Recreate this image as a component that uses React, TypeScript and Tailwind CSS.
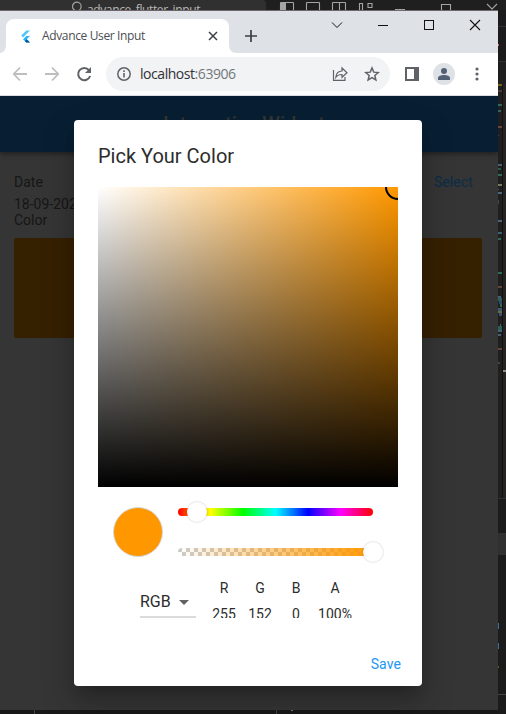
import React from "react";

const MINIMAP: [number, number, number, number, string][] = [
  [0, 84, 4, 2, "#8a6d14"], [0, 90, 4, 2, "#5a4038"], [0, 104, 4, 2, "#2f7a62"],
  [0, 110, 3, 2, "#3a7264"], [0, 126, 4, 2, "#7a4c3e"], [0, 135, 1, 1, "#55453e"],
  [0, 164, 4, 2, "#4f6d80"], [0, 168, 3, 2, "#2c6455"], [0, 174, 4, 2, "#2f7a62"],
  [0, 184, 4, 2, "#8b8a66"], [0, 189, 1, 1, "#466b80"], [0, 192, 4, 2, "#51788f"],
  [0, 200, 1, 4, "#4b4b4b"], [0, 220, 4, 2, "#54748a"], [0, 232, 4, 2, "#456b85"],
  [0, 238, 3, 2, "#2f7a62"], [0, 272, 4, 2, "#2f7a62"], [0, 286, 4, 2, "#714b40"],
  [0, 296, 3, 2, "#4e6f88"], [0, 298, 4, 3, "#2f6b62"], [1, 301, 3, 3, "#35547a"],
  [2, 304, 2, 3, "#2f7a62"], [0, 308, 4, 3, "#44647e"], [0, 311, 4, 2, "#77754f"],
  [1, 313, 3, 3, "#3c5b7d"], [2, 324, 1, 2, "#666"], [0, 326, 4, 5, "#2f6b62"],
  [0, 330, 4, 2, "#456b85"], [0, 334, 3, 2, "#4e6f80"], [0, 348, 4, 2, "#714b40"],
  [0, 362, 2, 2, "#4b4b4b"],
];

function EditorTop() {
  return (
    <div className="flex h-[10px] overflow-hidden bg-[#1f1f1f] text-[12px] leading-[20px] text-[#b8b8b8]">
      <div className="flex h-[10px] w-[266px] overflow-hidden rounded-tr-[4px] bg-[#303030] pl-[71px]">
        <svg width="12" height="10" fill="none" stroke="#a0a0a0" strokeWidth="1.2">
          <circle cx="5.8" cy="6.5" r="4.3" /><path d="M3 10l-3 3" />
        </svg>
        <span className="ml-[4px] whitespace-nowrap font-['Open_Sans',sans-serif] tracking-[-0.38px]">advance_flutter_input</span>
      </div>
      <svg width="240" height="10" fill="none" stroke="#a5a5a5" strokeWidth="1.1">
        <path d="M14.5 12V3q0-.5.5-.5h12q.5 0 .5.5v9M40.500 12V3q0-.5.5-.5h12q.5 0 .5.5v9M66.500 12V3q0-.5.5-.5h12q.5 0 .5.5v9M73.500 3v9M93.500 12V3.500h3V12M102 3.500h4v4h-4z" />
        <path d="M15 3h5v7h-5z" fill="#a5a5a5" stroke="none" />
        <path d="M129 9.500h10M175.500 12V4.500h9V12M221 4l10 10M231 4l-10 10" />
      </svg>
    </div>
  );
}

function EditorSide() {
  return (
    <svg className="ml-auto block" width="8" height="704" viewBox="0 10 8 704" shapeRendering="crispEdges">
      <path d="M0 10h8v704H0z" fill="#1b1b1b" />
      <path d="M0 26h8v1H0zM0 61h8v1H0zM0 498h8v1H0z" fill="#303030" />
      <path d="M0 62h8v436H0z" fill="#1f1f1f" />
      <path d="M4 84h1v414H4z" fill="#111" />
      <path d="M5 84h3v414H5z" fill="#252422" />
      <path d="M0 533h8v22H0z" fill="#303030" />
      <path d="M5 370h3v2H5z" fill="#8a8a8a" />
      <path d="M0 44h1v2H0z" fill="#d86b55" />
      <path d="M0 623h1v6H0zM0 643h1v6H0z" fill="#35749f" />
      <path d="M0 666h1v2H0z" fill="#496326" />
      <path d="M0 694h8v1H0z" fill="#444" />
      {MINIMAP.map(([x, y, w, h, c], i) => <rect key={i} x={x} y={y} width={w} height={h} fill={c} opacity="0.85" />)}
    </svg>
  );
}

function TabStrip() {
  return (
    <div className="flex h-[42px] items-start bg-[#dee1e6]">
      <div className="relative ml-[6px] mt-[8px] flex h-[34px] w-[223px] items-center rounded-t-[8px] bg-white pl-[14px]">
        <svg className="absolute bottom-0 left-[-6px]" width="6" height="8"><path d="M6 0v8H0Q6 7 6 0" fill="#fff" /></svg>
        <svg className="absolute bottom-0 right-[-8px]" width="8" height="8"><path d="M0 0v8h8Q0 8 0 0" fill="#fff" /></svg>
        <svg width="12" height="13" viewBox="0 0 12 13">
          <path d="M6.300.5H10L3 7.500 1.200 5.600z" fill="#54c5f8" />
          <path d="M6.300 6H10L6.700 9.200 10 12.500H6.300L3 9.200z" fill="#29b6f6" />
          <path d="M4.900 11l1.800-1.800L10 12.500H6.300z" fill="#01579b" />
        </svg>
        <span className="ml-[10px] whitespace-nowrap font-['Open_Sans',sans-serif] text-[12px] leading-[16px] tracking-[-0.36px] text-[#4b4e53]">Advance User Input</span>
        <svg className="absolute left-[202px] top-[12px]" width="10" height="10" stroke="#3c4043" strokeWidth="1.5"><path d="M1 1l8 8M9 1l-8 8" /></svg>
      </div>
      <svg className="ml-[15px] mt-[18px]" width="14" height="14" stroke="#3c4043" strokeWidth="1.7"><path d="M7 1v12M1 7h12" /></svg>
      <svg className="ml-[72px] mt-[7px]" width="152" height="14" fill="none" stroke="#111" strokeWidth="1">
        <path d="M2 4.500l5 5 5-5" />
        <path d="M48 7.500h10M94.500 2.500h9v9h-9z" shapeRendering="crispEdges" />
        <path d="M140 2l10 10M150 2l-10 10" strokeWidth="1.100" />
      </svg>
    </div>
  );
}

function Toolbar() {
  return (
    <div className="flex h-[43px] items-center border-b border-[#d9dde1] bg-white">
      <svg className="ml-[12px] shrink-0" width="81" height="16" fill="none" stroke="#bdbec0" strokeWidth="1.800">
        <path d="M15 8H2M8 1.500L1.800 8 8 14.500M33 8h13M40 1.500L46.200 8 40 14.500" />
        <path d="M77 4.200A6.100 6.100 0 1 0 78.100 10" stroke="#5f6368" strokeWidth="2" />
        <path d="M79 1v6h-6z" fill="#5f6368" stroke="none" />
      </svg>
      <div className="ml-[13px] flex h-[34px] w-[284px] shrink-0 items-center rounded-full bg-[#f1f3f4] pl-[11px]">
        <svg width="14" height="14" fill="none" stroke="#5f6368" strokeWidth="1.500">
          <circle cx="7" cy="7" r="6.200" /><path d="M7 6v4.500M7 3.300v1.600" strokeWidth="1.600" />
        </svg>
        <span className="ml-[9px] w-[100px] whitespace-nowrap font-['Open_Sans',sans-serif] text-[14px] leading-[20px] tracking-[-0.45px] text-[#303134]">localhost<span className="text-[#73777b]">:63906</span></span>
        <svg className="ml-[92px]" width="16" height="16" fill="none" stroke="#5f6368" strokeWidth="1.200">
          <path d="M1.500 4v10.400h11.500V11M3.800 11.200C4.200 7.200 6.500 5.200 10 5V2l5 4.800-5 4.500V8.500C7 8.500 5 9.500 3.800 11.200z" />
        </svg>
        <svg className="ml-[16px]" width="16" height="16" fill="none" stroke="#5f6368" strokeWidth="1.500">
          <path d="M8 2l1.750 4.150 4.500.4-3.400 2.950 1 4.400L8 11.550 4.150 13.900l1-4.400-3.400-2.950 4.500-.4z" />
        </svg>
      </div>
      <svg className="ml-[15px] shrink-0" width="14" height="14"><path d="M1 1h12v12H1z" fill="none" stroke="#5f6368" strokeWidth="2" /><path d="M9 1h5v12H9z" fill="#5f6368" /></svg>
      <div className="ml-[14px] flex size-[22px] shrink-0 items-center justify-center rounded-full bg-[#dee1e6]">
        <svg width="12" height="12" fill="#526076"><circle cx="6" cy="3" r="3" /><path d="M0 12v-2c0-2 3-3 6-3s6 1 6 3v2z" /></svg>
      </div>
      <svg className="ml-[20px] shrink-0" width="4" height="14" fill="#5f6368"><circle cx="2" cy="2" r="1.600" /><circle cx="2" cy="7" r="1.600" /><circle cx="2" cy="12" r="1.600" /></svg>
    </div>
  );
}

function AppPage() {
  return (
    <div className="h-[614px] overflow-hidden bg-[#353535] text-[14px] leading-[16px] text-[#161616]">
      <div className="flex h-[56px] items-center justify-center bg-[#081f33] pr-[10px] text-[20px] font-medium text-[#353535] shadow-[0_2px_5px_rgba(0,0,0,0.4)]">
        Interactive Widget
      </div>
      <div className="flex justify-between px-[14px] pt-[22px]">
        <span>Date</span>
        <span className="mr-[11px] tracking-[0.1px] text-[#0b2c48]">Select</span>
      </div>
      <div className="px-[14px] pt-[6px]">18-09-2023</div>
      <div className="px-[14px]">Color</div>
      <div className="mx-[14px] mr-[16px] mt-[10px] h-[100px] rounded-[2px] bg-[#352000]" />
    </div>
  );
}

function Knob({ className }: { className: string }) {
  return <div className={"absolute size-[20px] rounded-full bg-white shadow-[0_0_2px_rgba(0,0,0,0.25)] " + className} />;
}

function Channel({ label, value, className }: { label: string; value: string; className: string }) {
  return (
    <div className={"flex flex-col items-center " + className}>
      <span className="h-[24px]">{label}</span>
      <span className="h-[14px] overflow-hidden pt-[2px]">{value}</span>
    </div>
  );
}

function ColorDialog() {
  return (
    <div className="absolute left-[74px] top-[109px] flex h-[566px] w-[348px] flex-col rounded-[4px] bg-white px-[24px] text-[14px] leading-[16px] text-[#2c2c2c] shadow-[0_11px_15px_-7px_rgba(0,0,0,0.2),0_14px_30px_3px_rgba(0,0,0,0.22)]">
      <h1 className="mt-[24px] h-[43px] text-[20px] leading-[24px]">Pick Your Color</h1>
      <div className="relative h-[300px] overflow-hidden bg-[linear-gradient(to_bottom,transparent,#000),linear-gradient(to_right,#fff,#ff9800)]">
        <div className="absolute right-[-13px] top-[-13px] size-[26px] rounded-full border-2 border-black" />
      </div>
      <div className="flex h-[81px] items-center">
        <div className="ml-[15px] mt-[9px] size-[50px] rounded-full border border-[#d5d9df] bg-[#ff9800]" />
        <div className="ml-[15px] mt-[8px] flex w-[195px] flex-col gap-[32px]">
          <div className="relative h-[8px] rounded-full bg-[linear-gradient(to_right,#f00,#ff0,#0f0,#0ff,#00f,#f0f,#f00)]">
            <Knob className="left-[9px] top-[-6px]" />
          </div>
          <div className="relative h-[8px] rounded-full bg-[linear-gradient(to_right,rgba(255,152,0,0),#ff9800),repeating-conic-gradient(#fff_0%_25%,#ccc_0%_50%)] bg-[size:100%_100%,8px_8px]">
            <Knob className="left-[185px] top-[-6px]" />
          </div>
        </div>
      </div>
      <div className="flex pt-[12px]">
        <div className="ml-[42px] flex h-[38px] w-[56px] items-center justify-between border-b-2 border-[#dbdbdb] pr-[7px] pt-[8px] text-[16px] leading-[20px]">
          RGB
          <svg width="10" height="5"><path d="M0 0h10L5 5z" fill="#616161" /></svg>
        </div>
        <Channel className="ml-[8px] w-[40px]" label="R" value="255" />
        <Channel className="w-[32px]" label="G" value="152" />
        <Channel className="w-[40px]" label="B" value="0" />
        <Channel className="w-[38px]" label="A" value="100%" />
      </div>
      <button className="ml-auto mr-[-3px] mt-[38px] text-[14px] leading-[16px] tracking-[0.1px] text-[#2196f3]">Save</button>
    </div>
  );
}

export default function App() {
  return (
    <div className="relative h-[714px] w-[506px] overflow-hidden bg-[#1a1a1a] font-[Roboto,sans-serif]">
      <EditorTop />
      <EditorSide />
      <div className="absolute left-0 top-[710px] flex h-[4px] w-[498px] bg-[#181818]">
        <div className="ml-[34px] w-px bg-[#424242]" />
        <div className="ml-[241px] w-px bg-[#424242]" />
        <div className="ml-[14px] h-px w-[2px] bg-[#777777]" />
      </div>
      <div className="absolute left-0 top-[10px] h-[700px] w-[498px] border-t border-[#70666b]">
        <TabStrip />
        <Toolbar />
        <AppPage />
        <ColorDialog />
      </div>
    </div>
  );
}
